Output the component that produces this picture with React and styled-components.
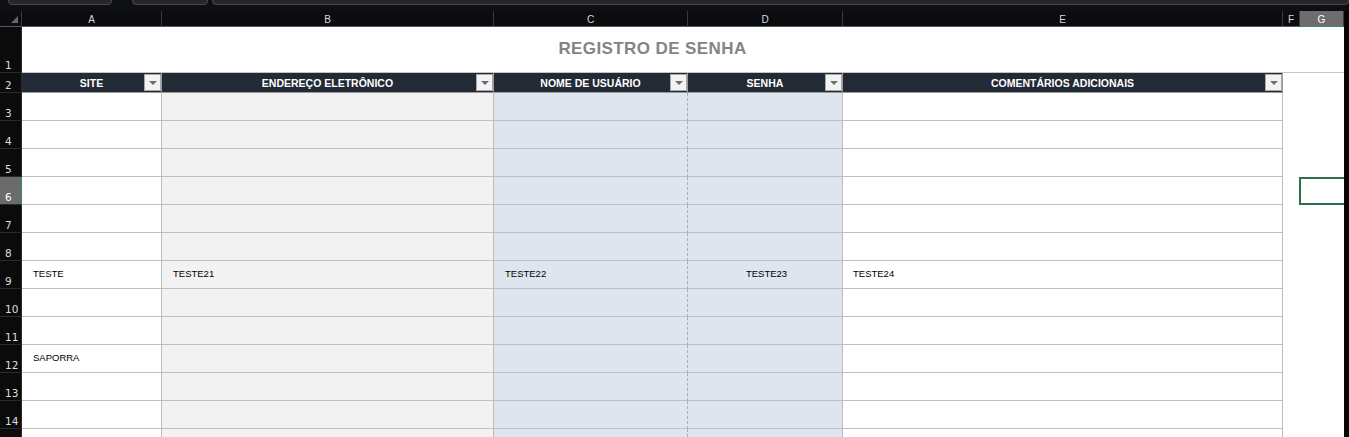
import React from 'react';
import styled, { createGlobalStyle } from 'styled-components';

const GlobalStyle = createGlobalStyle`
  html, body {
    margin: 0;
    padding: 0;
    background: #0a0a0a;
    overflow: hidden;
  }
  body {
    font-family: "Liberation Sans", Arial, sans-serif;
  }
`;

const letters = ['A', 'B', 'C', 'D', 'E', 'F', 'G'];

const headers = [
  'SITE',
  'ENDEREÇO ELETRÔNICO',
  'NOME DE USUÁRIO',
  'SENHA',
  'COMENTÁRIOS ADICIONAIS',
];

// column look inside the table body
const bodyCols = [
  { bg: '#ffffff', line: 'solid', pad: '11px', align: 'flex-start' },
  { bg: '#f2f2f2', line: 'solid', pad: '11px', align: 'flex-start' },
  { bg: '#dfe5ef', line: 'dashed', pad: '11px', align: 'flex-start' },
  { bg: '#dfe5ef', line: 'solid', pad: '3px', align: 'center' },
  { bg: '#ffffff', line: 'solid', pad: '10px', align: 'flex-start' },
];

const rows = [
  { n: 3 },
  { n: 4 },
  { n: 5 },
  { n: 6, active: true },
  { n: 7 },
  { n: 8 },
  { n: 9, data: ['TESTE', 'TESTE21', 'TESTE22', 'TESTE23', 'TESTE24'] },
  { n: 10 },
  { n: 11 },
  { n: 12, data: ['SAPORRA'] },
  { n: 13 },
  { n: 14 },
  { n: '' },
];

const TopStrip = styled.div`
  height: 11px;
  display: flex;
  background: #0d0f14;
  overflow: hidden;
`;

const Tab = styled.div`
  margin-top: -8px;
  margin-left: ${(p) => p.$ml}px;
  width: ${(p) => (p.$w ? `${p.$w}px` : 'auto')};
  flex: ${(p) => (p.$w ? 'none' : '1')};
  height: 11px;
  border: 1px solid #4a4a4a;
  border-radius: 4px;
  background: #262626;
`;

const Sheet = styled.div`
  display: grid;
  grid-template-columns: 22px 140px 332px 194px 155px 440px 17px 44px 1fr;
  grid-template-rows: 16px 46px 20px;
  grid-auto-rows: 28px;
  background: #ffffff;
`;

const Corner = styled.div`
  position: relative;
  background: #0b0c10;
  border-right: 1px solid #3a3a3a;
  border-bottom: 1px solid #5a5a5a;
  &::after {
    content: '';
    position: absolute;
    right: 3px;
    bottom: 3px;
    border-style: solid;
    border-width: 0 0 7px 7px;
    border-color: transparent transparent #666 transparent;
  }
`;

const ColHead = styled.div`
  box-sizing: border-box;
  display: flex;
  align-items: center;
  justify-content: center;
  padding-top: 2px;
  font-size: 10px;
  color: ${(p) => (p.$active ? '#ffffff' : '#d8d8d8')};
  background: ${(p) => (p.$active ? '#6d6d6d' : '#0b0c10')};
  border-right: 1px solid #3a3a3a;
  border-bottom: ${(p) => (p.$active ? '1px solid #3b8b5f' : '1px solid #5a5a5a')};
`;

const Filler = styled.div`
  background: #050505;
`;

const RowNum = styled.div`
  box-sizing: border-box;
  display: flex;
  align-items: flex-end;
  padding: 0 0 1px 5px;
  font-family: "DejaVu Sans", sans-serif;
  font-size: 10.5px;
  color: ${(p) => (p.$active ? '#ffffff' : '#dedede')};
  background: ${(p) => (p.$active ? '#6b6b6b' : '#0b0b0b')};
  border-right: ${(p) => (p.$active ? '1px solid #3b8b5f' : '1px solid #2a2a2a')};
  border-bottom: 1px solid #2a2a2a;
`;

const TitleCell = styled.div`
  grid-column: span 5;
  box-sizing: border-box;
  display: flex;
  align-items: center;
  justify-content: center;
  padding-bottom: 2px;
  font-size: 17px;
  font-weight: bold;
  color: #848484;
  letter-spacing: 0.4px;
  border-bottom: 1px solid #c4c4c4;
`;

const Plain = styled.div`
  box-sizing: border-box;
  background: #ffffff;
  border-bottom: ${(p) => (p.$line ? '1px solid #c4c4c4' : 'none')};
`;

const Selected = styled.div`
  box-sizing: border-box;
  margin-left: -1px;
  background: #ffffff;
  border: 2px solid #2f6f4b;
  border-right: none;
`;

const HeadCell = styled.div`
  position: relative;
  box-sizing: border-box;
  display: flex;
  align-items: center;
  justify-content: center;
  background: #222a35;
  color: #ffffff;
  font-size: 10.5px;
  font-weight: bold;
  border-right: 1px solid #9a9a9a;
  border-bottom: 1px solid #9a9a9a;
`;

const FilterButton = styled.div`
  position: absolute;
  right: 0;
  top: 1px;
  width: 17px;
  height: 17px;
  box-sizing: border-box;
  background: #f3f3f3;
  border: 1px solid #a8a8a8;
  display: flex;
  align-items: center;
  justify-content: center;
  &::after {
    content: '';
    border-style: solid;
    border-width: 4px 4px 0 4px;
    border-color: #6c6c6c transparent transparent transparent;
    margin-top: 1px;
  }
`;

const Cell = styled.div`
  box-sizing: border-box;
  display: flex;
  align-items: center;
  justify-content: ${(p) => p.$align};
  padding: 0 0 2px ${(p) => p.$pad};
  font-size: 9.5px;
  color: #000000;
  background: ${(p) => p.$bg};
  border-bottom: 1px solid #bfbfbf;
  border-right: 1px ${(p) => p.$line} ${(p) => (p.$line === 'dashed' ? '#a9b0bb' : '#bdbdbd')};
`;

export default function App() {
  return (
    <>
      <GlobalStyle />
      <TopStrip>
        <Tab $ml={8} $w={102} />
        <Tab $ml={20} $w={74} />
        <Tab $ml={4} />
      </TopStrip>
      <Sheet>
        <Corner />
        {letters.map((l) => (
          <ColHead key={l} $active={l === 'G'}>
            {l}
          </ColHead>
        ))}
        <Filler />

        <RowNum>1</RowNum>
        <TitleCell>REGISTRO DE SENHA</TitleCell>
        <Plain $line />
        <Plain $line />
        <Filler />

        <RowNum>2</RowNum>
        {headers.map((h) => (
          <HeadCell key={h}>
            {h}
            <FilterButton />
          </HeadCell>
        ))}
        <Plain />
        <Plain />
        <Filler />

        {rows.map((r, idx) => (
          <React.Fragment key={idx}>
            <RowNum $active={r.active}>{r.n}</RowNum>
            {bodyCols.map((c, i) => (
              <Cell key={i} $bg={c.bg} $line={c.line} $pad={c.pad} $align={c.align}>
                {r.data ? r.data[i] : ''}
              </Cell>
            ))}
            <Plain />
            {r.active ? <Selected /> : <Plain />}
            <Filler />
          </React.Fragment>
        ))}
      </Sheet>
    </>
  );
}
